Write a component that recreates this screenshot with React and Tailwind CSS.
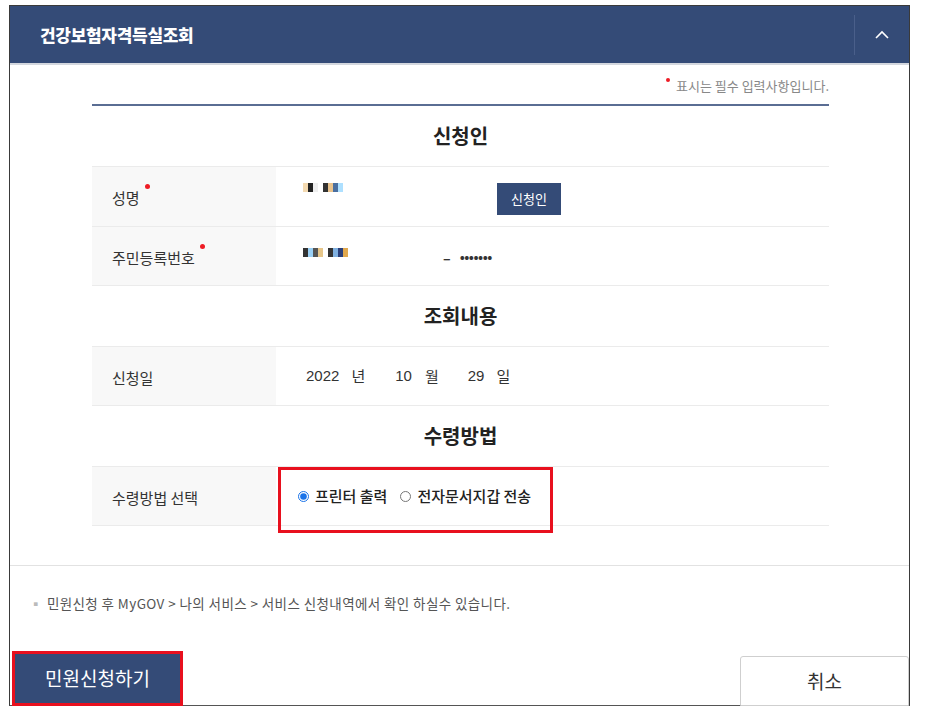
import { useState } from 'react';

const FONT = { fontFamily: '"Noto Sans CJK KR", "Noto Sans", sans-serif' };
const LATIN = { fontFamily: '"Liberation Sans", sans-serif' };

// masked personal data in the screenshot is shown as a pixelated blur
function Pixelated({ cells }) {
  return (
    <div className="flex">
      {cells.map((c, i) => (
        <div key={i} className="w-[5px] h-[9px]" style={{ background: c }} />
      ))}
    </div>
  );
}

function Required() {
  return <span className="inline-block w-[5px] h-[5px] rounded-full bg-[#ee1c25] ml-[5px] -translate-y-[12px]" />;
}

function SectionTitle({ children }) {
  return (
    <div className="h-[60px] flex items-center justify-center text-[20px] font-bold text-[#222]">{children}</div>
  );
}

function Row({ label, required, children, last }) {
  return (
    <div className={`flex h-[60px] border-t border-[#ebebeb] ${last ? 'border-b' : ''}`}>
      <div className="w-[184px] bg-[#f8f8f8] flex items-center pl-[20px] pt-[4px] text-[15px] text-[#333]">
        <span>{label}</span>
        {required && <Required />}
      </div>
      <div className="flex-1 relative flex items-center pl-[22px] text-[15px] text-[#333]">{children}</div>
    </div>
  );
}

export default function App() {
  const [method, setMethod] = useState('print');

  return (
    <div className="w-[925px] h-[726px] bg-white pt-[5px] pl-[9px]" style={FONT}>
      <div className="w-[901px] h-[701px] border border-[#3a3a3a] border-b-[#555] flex flex-col">
        {/* header */}
        <div className="h-[59px] bg-[#344b77] flex items-center border-b-2 border-[#d3d7de]">
          <h2 className="flex-1 pl-[30px] text-[17px] font-black text-white tracking-[-0.3px]">건강보험자격득실조회</h2>
          <div className="h-[40px] w-px bg-[#4a5f8a]" />
          <button className="w-[54px] h-full flex items-center justify-center">
            <svg width="14" height="9" viewBox="0 0 14 9" fill="none">
              <polyline points="1,8 7,2 13,8" stroke="white" strokeWidth="1.6" />
            </svg>
          </button>
        </div>

        {/* form */}
        <div className="ml-[82px] w-[737px]">
          <div className="h-[39px] flex items-center justify-end text-[13px] text-[#888] pt-[2px]">
            <span className="inline-block w-[4px] h-[4px] rounded-full bg-[#ee1c25] mr-[6px] -translate-y-[6px]" />
            표시는 필수 입력사항입니다.
          </div>
          <div className="h-[2px] bg-[#5a6d93]" />

          <SectionTitle>신청인</SectionTitle>
          <Row label="성명" required>
            <div className="self-start mt-[16px]">
              <Pixelated cells={['#fff', '#f3d9b0', '#222', '#eee', '#fff', '#333', '#e9c38d', '#4a6fa0', '#aee0ff']} />
            </div>
            <button className="ml-[154px] mt-[4px] h-[32px] w-[64px] bg-[#344b77] text-white text-[13px]">신청인</button>
          </Row>
          <Row label="주민등록번호" required last>
            <div className="self-start mt-[21px]">
              <Pixelated cells={['#fff', '#333', '#9ad0f5', '#555', '#e6c68a', '#fff', '#333', '#7fb0e0', '#2a3f7a', '#e0a84e']} />
            </div>
            <span className="ml-[95px] mt-[4px] text-[14px] font-bold">–</span>
            <span className="ml-[9px] tracking-[-0.5px] text-[15px]">•••••••</span>
          </Row>

          <SectionTitle>조회내용</SectionTitle>
          <Row label="신청일" last>
            <div className="flex items-center pl-[8px] text-[15px] text-[#333]">
              <span style={LATIN}>2022</span>
              <span className="ml-[12px]">년</span>
              <span className="ml-[30px]" style={LATIN}>10</span>
              <span className="ml-[13px]">월</span>
              <span className="ml-[29px]" style={LATIN}>29</span>
              <span className="ml-[12px]">일</span>
            </div>
          </Row>

          <SectionTitle>수령방법</SectionTitle>
          <Row label="수령방법 선택" last>
            <label className="flex items-center gap-[6px] text-[15px] font-medium text-[#222]">
              <input
                type="radio"
                name="method"
                checked={method === 'print'}
                onChange={() => setMethod('print')}
                className="w-[11px] h-[11px] m-0 accent-[#1a73e8]"
              />
              프린터 출력
            </label>
            <label className="ml-[13px] flex items-center gap-[6px] text-[15px] font-medium text-[#222]">
              <input
                type="radio"
                name="method"
                checked={method === 'wallet'}
                onChange={() => setMethod('wallet')}
                className="w-[11px] h-[11px] m-0"
              />
              전자문서지갑 전송
            </label>
            {/* red annotation box */}
            <div className="absolute left-[2px] top-0 w-[275px] h-[66px] border-[3px] border-[#e8101e] pointer-events-none" />
          </Row>
        </div>

        <div className="mt-[39px] h-px bg-[#e2e2e2]" />
        <p className="mt-[27px] pl-[19px] text-[13.5px] text-[#555] tracking-[0.4px]">
          <span className="text-[#bbb] mr-[4px]">▪</span>
          민원신청 후 MyGOV &gt; 나의 서비스 &gt; 서비스 신청내역에서 확인 하실수 있습니다.
        </p>

        <div className="mt-auto flex items-end justify-between pl-[2px] -mb-px">
          <button className="w-[171px] h-[55px] bg-[#344b77] border-[3px] border-[#e8101e] text-white text-[19px]">
            민원신청하기
          </button>
          <button className="w-[169px] h-[50px] bg-white border border-[#cfcfcf] rounded-t-[3px] text-[19px] text-[#333]">
            취소
          </button>
        </div>
      </div>
    </div>
  );
}
